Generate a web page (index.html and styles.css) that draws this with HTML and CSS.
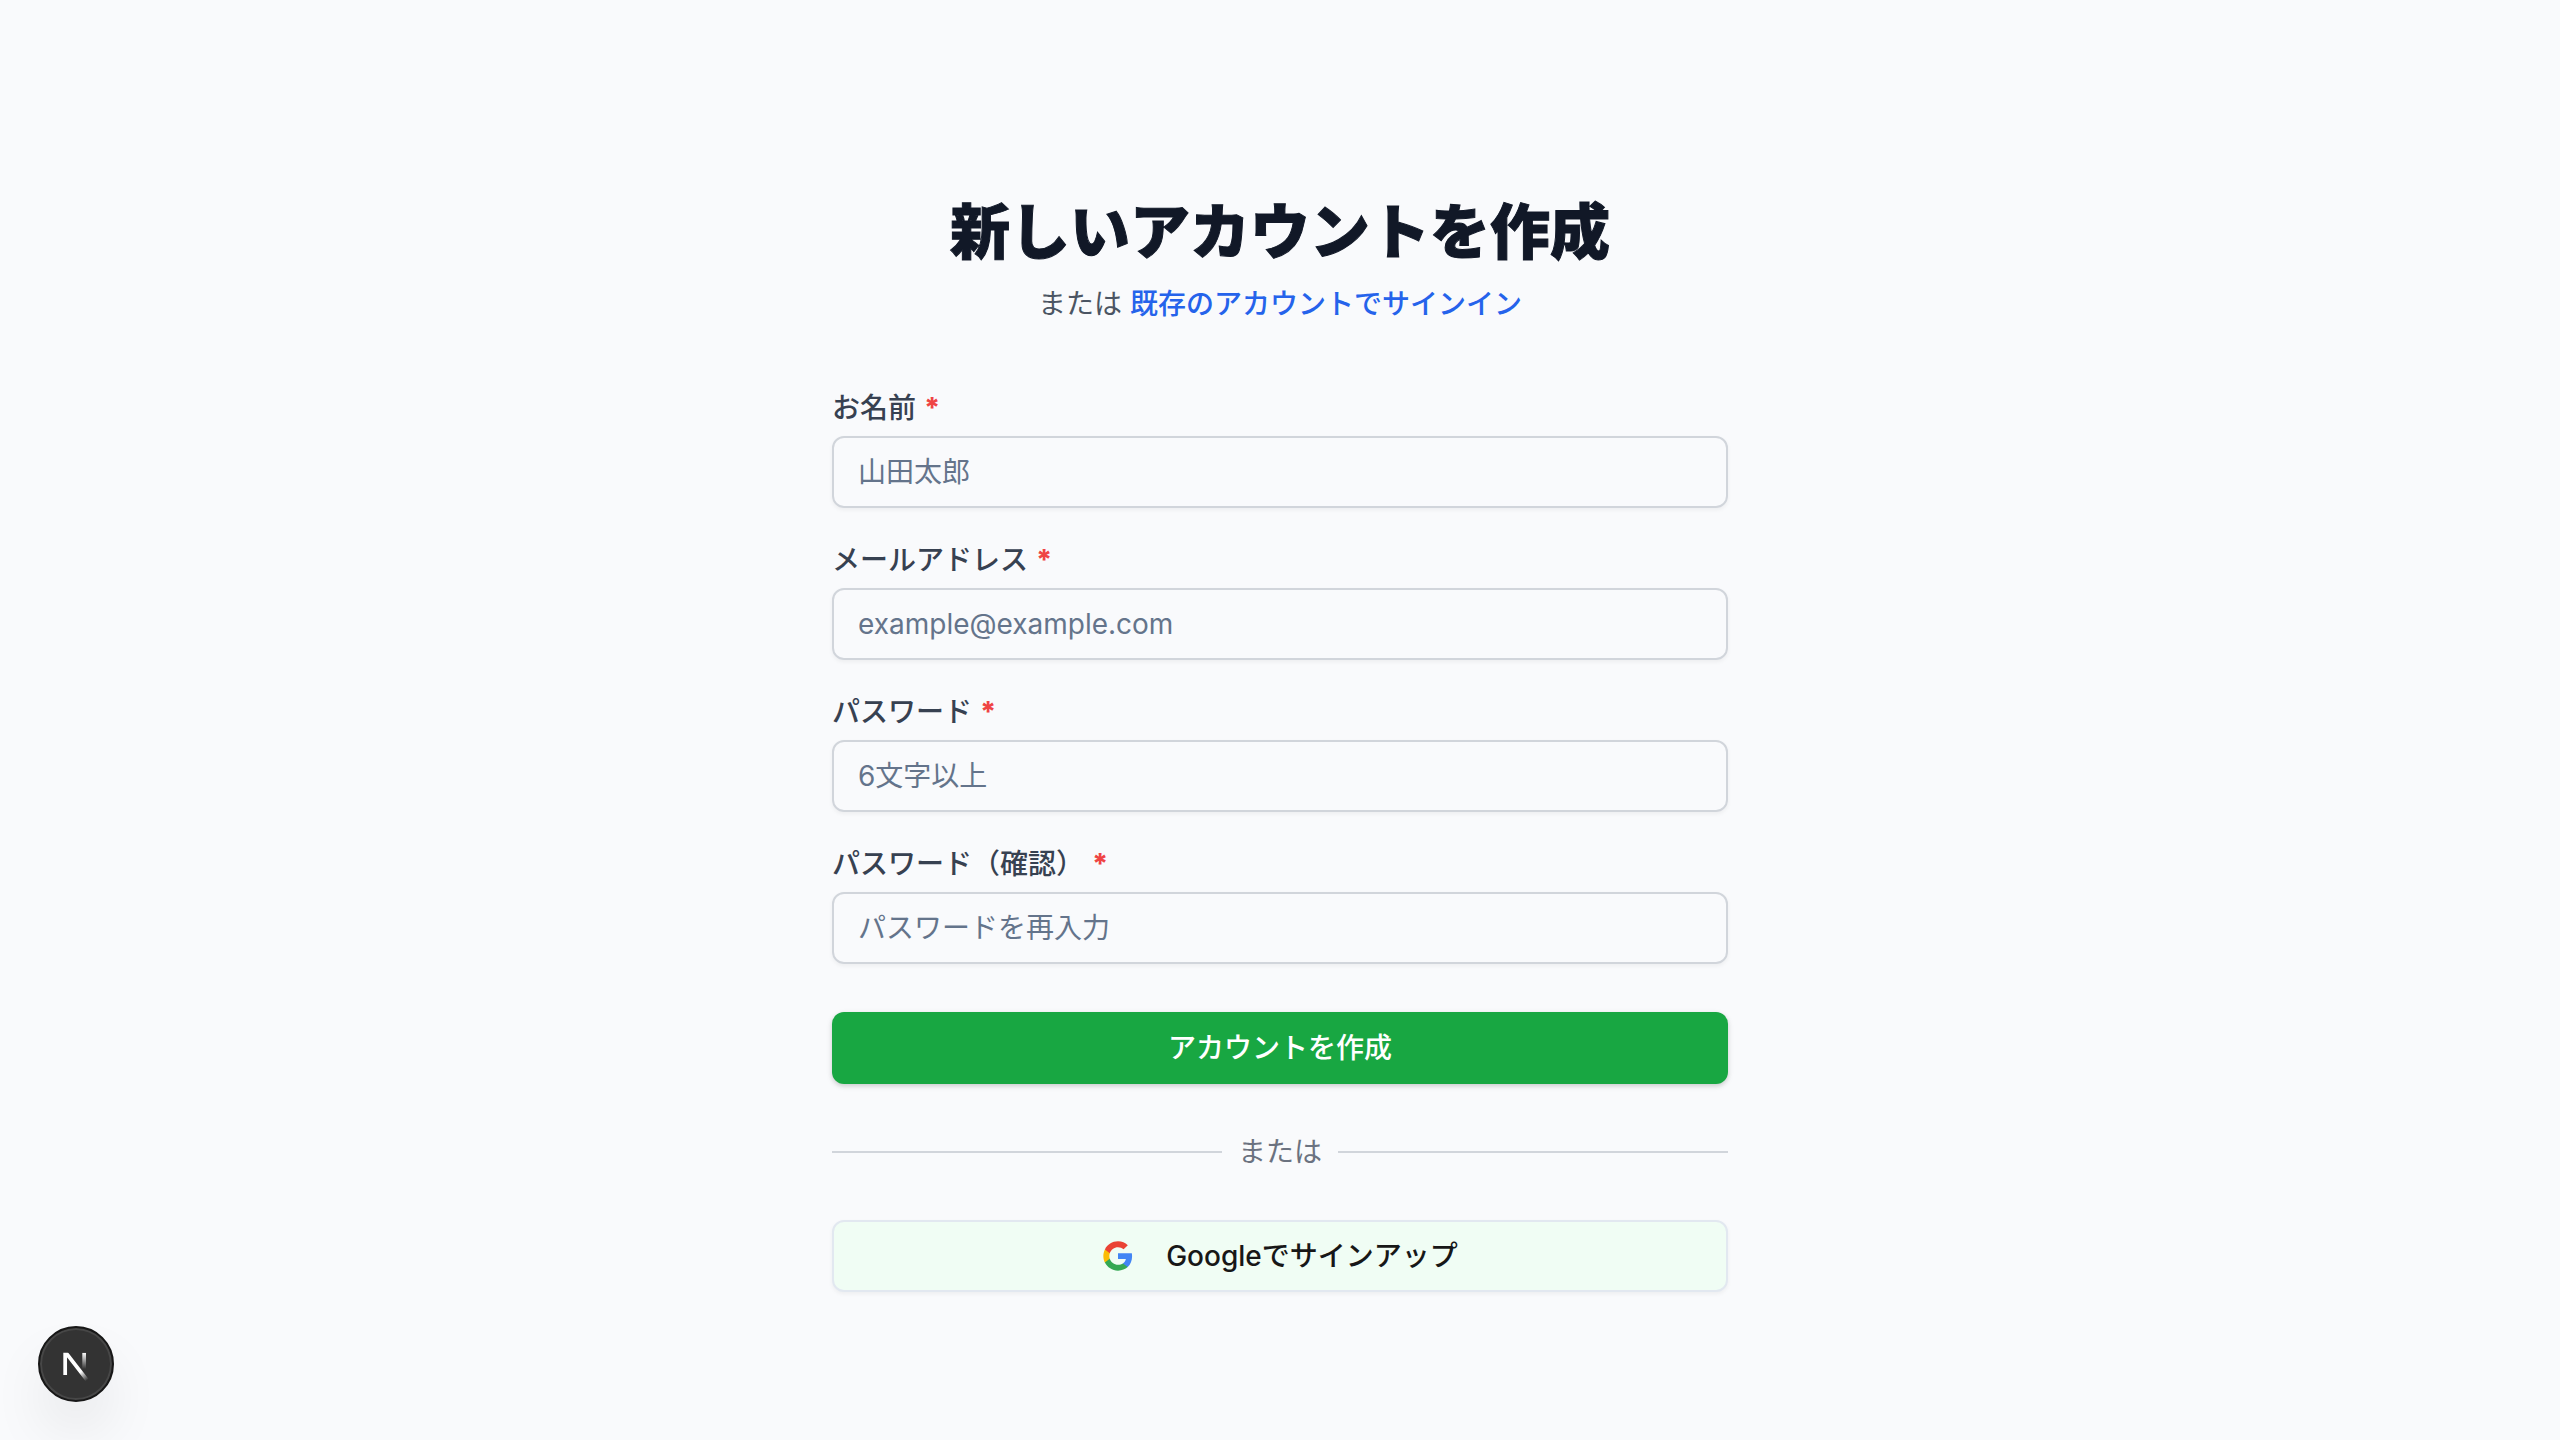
FILE: index.html
```html
<!DOCTYPE html>
<html lang="ja">
<head>
  <meta charset="utf-8">
  <meta name="viewport" content="width=device-width, initial-scale=1">
  <title>新しいアカウントを作成</title>
  <link rel="stylesheet" href="styles.css">
</head>
<body>
  <main class="page">
    <div class="signup">
      <header class="intro">
        <h1 class="title">新しいアカウントを作成</h1>
        <p class="subtitle">または <a class="link" href="#signin">既存のアカウントでサインイン</a></p>
      </header>
      <form class="form">
        <div class="fields">
          <div class="field">
            <label class="label" for="name">お名前<span class="required">*</span></label>
            <input class="input" id="name" name="name" type="text" placeholder="山田太郎">
          </div>
          <div class="field">
            <label class="label" for="email">メールアドレス<span class="required">*</span></label>
            <input class="input" id="email" name="email" type="email" placeholder="example@example.com">
          </div>
          <div class="field">
            <label class="label" for="password">パスワード<span class="required">*</span></label>
            <input class="input" id="password" name="password" type="password" placeholder="6文字以上">
          </div>
          <div class="field">
            <label class="label" for="confirm">パスワード（確認）<span class="required">*</span></label>
            <input class="input" id="confirm" name="confirm" type="password" placeholder="パスワードを再入力">
          </div>
        </div>
        <button class="button button-primary" type="submit">アカウントを作成</button>
        <div class="divider">または</div>
        <button class="button button-google" type="button">
          <svg class="google-icon" viewBox="0 0 24 24" aria-hidden="true">
            <path fill="#4285F4" d="M22.56 12.25c0-.78-.07-1.53-.2-2.25H12v4.26h5.92c-.26 1.37-1.04 2.53-2.21 3.31v2.77h3.57c2.08-1.92 3.28-4.74 3.28-8.09z"/>
            <path fill="#34A853" d="M12 23c2.97 0 5.46-.98 7.28-2.66l-3.57-2.77c-.98.66-2.23 1.06-3.71 1.06-2.86 0-5.29-1.93-6.16-4.53H2.18v2.84C3.99 20.53 7.7 23 12 23z"/>
            <path fill="#FBBC05" d="M5.84 14.09c-.22-.66-.35-1.36-.35-2.09s.13-1.43.35-2.09V7.07H2.18C1.43 8.55 1 10.22 1 12s.43 3.45 1.18 4.93l2.85-2.22.81-.62z"/>
            <path fill="#EA4335" d="M12 5.38c1.62 0 3.06.56 4.21 1.64l3.15-3.15C17.45 2.09 14.97 1 12 1 7.7 1 3.99 3.47 2.18 7.07l3.66 2.84c.87-2.6 3.3-4.53 6.16-4.53z"/>
          </svg>
          Googleでサインアップ
        </button>
      </form>
    </div>
  </main>
  <button class="dev-badge" type="button" aria-label="Open Next.js Dev Tools">
    <svg class="dev-logo" viewBox="0 0 36 36" fill="none" aria-hidden="true">
      <defs>
        <linearGradient id="diagonal" x1="9.95555" y1="11.1226" x2="15.4778" y2="17.9671" gradientUnits="userSpaceOnUse">
          <stop stop-color="white"/>
          <stop offset="0.604072" stop-color="white" stop-opacity="0"/>
          <stop offset="1" stop-color="white" stop-opacity="0"/>
        </linearGradient>
        <linearGradient id="stem" x1="11.8222" y1="1.40039" x2="11.791" y2="9.62542" gradientUnits="userSpaceOnUse">
          <stop stop-color="white"/>
          <stop offset="1" stop-color="white" stop-opacity="0"/>
        </linearGradient>
        <clipPath id="cap">
          <rect x="0" y="1.5" width="18" height="18"/>
        </clipPath>
      </defs>
      <g transform="translate(10.25 10.9)" stroke-width="1.86" clip-path="url(#cap)">
        <path d="M13.3 15.2 L2.34 1 V12.6" stroke="url(#diagonal)"/>
        <path d="M11.825 1.5 V13.1" stroke="url(#stem)"/>
      </g>
    </svg>
  </button>
</body>
</html>
```
FILE: styles.css
```css
*,
*::before,
*::after {
  box-sizing: border-box;
}

body {
  margin: 0;
  background: #f9fafc;
  color: #171717;
  font-family: Inter, "Noto Sans CJK JP", sans-serif;
  font-size: 28px;
  line-height: 40px;
}

.page {
  display: flex;
  align-items: center;
  justify-content: center;
  min-height: 100vh;
  padding: 96px 32px;
}

.signup {
  width: 100%;
  max-width: 896px;
}

.intro {
  padding-top: 48px;
  text-align: center;
}

.title {
  margin: 0;
  color: #111827;
  font-size: 60px;
  font-weight: 900;
  line-height: 72px;
  -webkit-text-stroke: 1px #111827;
}

.subtitle {
  margin: 16px 0 0;
  color: #4b5563;
}

.link {
  color: #2563eb;
  font-weight: 500;
  text-decoration: none;
}

.form {
  display: flex;
  flex-direction: column;
  gap: 48px;
  margin-top: 64px;
}

.fields {
  display: flex;
  flex-direction: column;
  gap: 32px;
}

.field {
  display: flex;
  flex-direction: column;
  gap: 8px;
}

.label {
  color: #374151;
  font-weight: 500;
}

.required {
  margin-left: 8px;
  color: #ef4444;
  font-weight: 800;
}

.input {
  width: 100%;
  height: 72px;
  padding: 8px 24px;
  border: 2px solid #d1d5db;
  border-radius: 12px;
  background: transparent;
  box-shadow: 0 2px 4px rgb(0 0 0 / 5%);
  color: #171717;
  font: inherit;
}

.input::placeholder {
  color: #64748b;
  opacity: 1;
}

.button {
  display: flex;
  align-items: center;
  justify-content: center;
  gap: 32px;
  height: 72px;
  padding: 0 32px;
  border: 0;
  border-radius: 12px;
  font: inherit;
  font-weight: 500;
  cursor: pointer;
}

.button-primary {
  background: #18a742;
  box-shadow: 0 2px 6px rgb(0 0 0 / 10%), 0 2px 4px rgb(0 0 0 / 10%);
  color: #fff;
}

.button-google {
  border: 2px solid #e2e8f0;
  background: #f0fdf4;
  box-shadow: 0 2px 4px rgb(0 0 0 / 5%);
  color: #171717;
}

.google-icon {
  width: 32px;
  height: 32px;
}

.divider {
  display: flex;
  align-items: center;
  gap: 16px;
  color: #6b7280;
}

.divider::before,
.divider::after {
  content: "";
  flex: 1;
  height: 2px;
  background: #d1d5db;
}

.dev-badge {
  position: fixed;
  bottom: 38px;
  left: 38px;
  width: 76px;
  height: 76px;
  padding: 0;
  border: 2px solid #171717;
  border-radius: 50%;
  background: #333;
  box-shadow: inset 0 0 0 2px #474747, 0 32px 64px -16px rgb(0 0 0 / 20%);
  cursor: pointer;
}

.dev-logo {
  display: block;
  width: 100%;
  height: 100%;
}
```
